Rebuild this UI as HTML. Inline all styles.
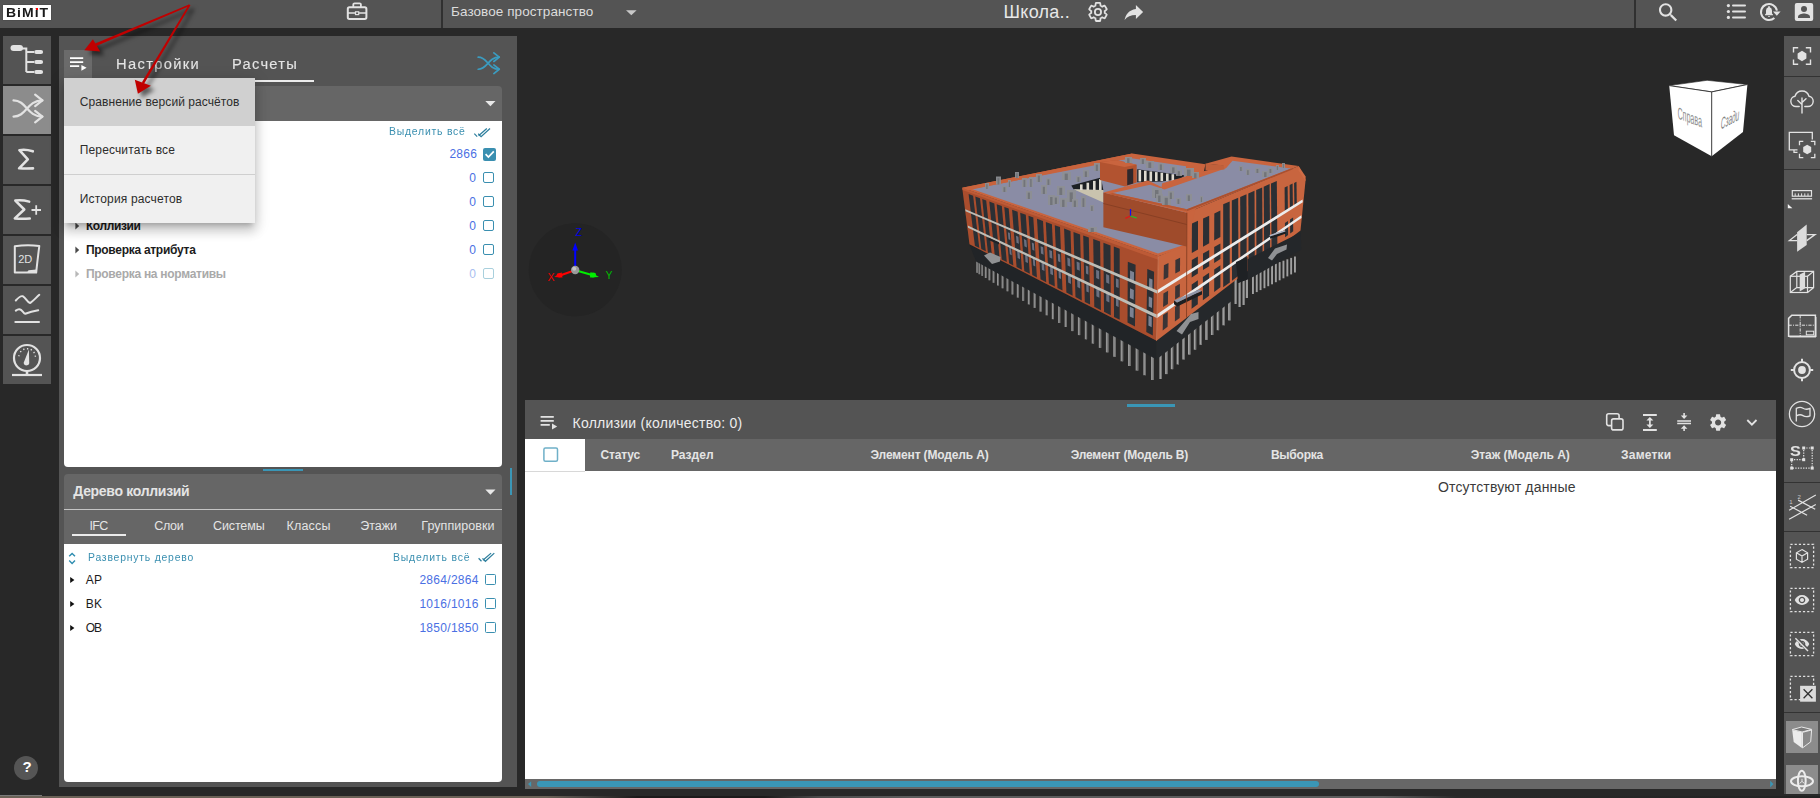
<!DOCTYPE html><html lang="ru"><head><meta charset="utf-8"><title>BiMiT</title><style>
html,body{margin:0;padding:0}body{width:1820px;height:798px;overflow:hidden;background:#282828;position:relative;font-family:'Liberation Sans', sans-serif}
.b{position:absolute}.t{position:absolute;white-space:pre;line-height:20px;height:20px}svg.f{position:absolute;left:0;top:0;pointer-events:none}
</style></head><body>
<svg class="f" width="1820" height="798" viewBox="0 0 1820 798"><rect x="976.3" y="259.8" width="1.6" height="13.0" fill="#a0a0a0" opacity="0.9"/><rect x="977.3" y="259.8" width="0.6" height="13.0" fill="#6e6e6e"/><rect x="978.5" y="261.0" width="1.6" height="13.2" fill="#a0a0a0" opacity="0.9"/><rect x="979.5" y="261.0" width="0.6" height="13.2" fill="#6e6e6e"/><rect x="981.4" y="262.5" width="1.6" height="13.4" fill="#a0a0a0" opacity="0.9"/><rect x="982.4" y="262.5" width="0.7" height="13.4" fill="#6e6e6e"/><rect x="984.8" y="264.4" width="1.7" height="13.6" fill="#a0a0a0" opacity="0.9"/><rect x="985.8" y="264.4" width="0.7" height="13.6" fill="#6e6e6e"/><rect x="988.5" y="266.4" width="1.7" height="13.9" fill="#a0a0a0" opacity="0.9"/><rect x="989.6" y="266.4" width="0.7" height="13.9" fill="#6e6e6e"/><rect x="992.6" y="268.6" width="1.7" height="14.2" fill="#a0a0a0" opacity="0.9"/><rect x="993.7" y="268.6" width="0.7" height="14.2" fill="#6e6e6e"/><rect x="997.0" y="271.0" width="1.7" height="14.5" fill="#a0a0a0" opacity="0.9"/><rect x="998.0" y="271.0" width="0.7" height="14.5" fill="#6e6e6e"/><rect x="1001.6" y="273.5" width="1.8" height="14.8" fill="#a0a0a0" opacity="0.9"/><rect x="1002.7" y="273.5" width="0.7" height="14.8" fill="#6e6e6e"/><rect x="1006.5" y="276.1" width="1.8" height="15.2" fill="#a0a0a0" opacity="0.9"/><rect x="1007.6" y="276.1" width="0.7" height="15.2" fill="#6e6e6e"/><rect x="1011.5" y="278.9" width="1.8" height="15.6" fill="#a0a0a0" opacity="0.9"/><rect x="1012.6" y="278.9" width="0.7" height="15.6" fill="#6e6e6e"/><rect x="1016.8" y="281.7" width="1.9" height="15.9" fill="#a0a0a0" opacity="0.9"/><rect x="1017.9" y="281.7" width="0.7" height="15.9" fill="#6e6e6e"/><rect x="1022.2" y="284.6" width="1.9" height="16.3" fill="#a0a0a0" opacity="0.9"/><rect x="1023.4" y="284.6" width="0.8" height="16.3" fill="#6e6e6e"/><rect x="1027.8" y="287.7" width="1.9" height="16.7" fill="#a0a0a0" opacity="0.9"/><rect x="1029.0" y="287.7" width="0.8" height="16.7" fill="#6e6e6e"/><rect x="1033.6" y="290.8" width="2.0" height="17.1" fill="#a0a0a0" opacity="0.9"/><rect x="1034.8" y="290.8" width="0.8" height="17.1" fill="#6e6e6e"/><rect x="1039.5" y="294.0" width="2.0" height="17.6" fill="#a0a0a0" opacity="0.9"/><rect x="1040.7" y="294.0" width="0.8" height="17.6" fill="#6e6e6e"/><rect x="1045.6" y="297.3" width="2.1" height="18.0" fill="#a0a0a0" opacity="0.9"/><rect x="1046.8" y="297.3" width="0.8" height="18.0" fill="#6e6e6e"/><rect x="1051.8" y="300.7" width="2.1" height="18.5" fill="#a0a0a0" opacity="0.9"/><rect x="1053.0" y="300.7" width="0.8" height="18.5" fill="#6e6e6e"/><rect x="1058.1" y="304.1" width="2.1" height="18.9" fill="#a0a0a0" opacity="0.9"/><rect x="1059.4" y="304.1" width="0.9" height="18.9" fill="#6e6e6e"/><rect x="1064.6" y="307.6" width="2.2" height="19.4" fill="#a0a0a0" opacity="0.9"/><rect x="1065.9" y="307.6" width="0.9" height="19.4" fill="#6e6e6e"/><rect x="1071.2" y="311.2" width="2.2" height="19.9" fill="#a0a0a0" opacity="0.9"/><rect x="1072.5" y="311.2" width="0.9" height="19.9" fill="#6e6e6e"/><rect x="1077.9" y="314.8" width="2.3" height="20.3" fill="#a0a0a0" opacity="0.9"/><rect x="1079.3" y="314.8" width="0.9" height="20.3" fill="#6e6e6e"/><rect x="1084.8" y="318.5" width="2.3" height="20.8" fill="#a0a0a0" opacity="0.9"/><rect x="1086.1" y="318.5" width="0.9" height="20.8" fill="#6e6e6e"/><rect x="1091.7" y="322.3" width="2.4" height="21.3" fill="#a0a0a0" opacity="0.9"/><rect x="1093.1" y="322.3" width="0.9" height="21.3" fill="#6e6e6e"/><rect x="1098.8" y="326.1" width="2.4" height="21.8" fill="#a0a0a0" opacity="0.9"/><rect x="1100.2" y="326.1" width="1.0" height="21.8" fill="#6e6e6e"/><rect x="1105.9" y="330.0" width="2.5" height="22.4" fill="#a0a0a0" opacity="0.9"/><rect x="1107.4" y="330.0" width="1.0" height="22.4" fill="#6e6e6e"/><rect x="1113.2" y="333.9" width="2.5" height="22.9" fill="#a0a0a0" opacity="0.9"/><rect x="1114.7" y="333.9" width="1.0" height="22.9" fill="#6e6e6e"/><rect x="1120.6" y="337.9" width="2.6" height="23.4" fill="#a0a0a0" opacity="0.9"/><rect x="1122.1" y="337.9" width="1.0" height="23.4" fill="#6e6e6e"/><rect x="1128.0" y="342.0" width="2.6" height="24.0" fill="#a0a0a0" opacity="0.9"/><rect x="1129.6" y="342.0" width="1.0" height="24.0" fill="#6e6e6e"/><rect x="1135.6" y="346.1" width="2.7" height="24.5" fill="#a0a0a0" opacity="0.9"/><rect x="1137.2" y="346.1" width="1.1" height="24.5" fill="#6e6e6e"/><rect x="1143.3" y="350.2" width="2.7" height="25.0" fill="#a0a0a0" opacity="0.9"/><rect x="1144.9" y="350.2" width="1.1" height="25.0" fill="#6e6e6e"/><rect x="1151.0" y="354.4" width="2.8" height="25.6" fill="#a0a0a0" opacity="0.9"/><rect x="1152.7" y="354.4" width="1.1" height="25.6" fill="#6e6e6e"/><rect x="1159.4" y="353.2" width="2.4" height="25.8" fill="#a2a2a2"/><rect x="1160.9" y="353.2" width="0.9" height="25.8" fill="#6e6e6e"/><rect x="1165.1" y="348.7" width="2.4" height="25.4" fill="#a2a2a2"/><rect x="1166.6" y="348.7" width="0.9" height="25.4" fill="#6e6e6e"/><rect x="1170.8" y="344.2" width="2.4" height="25.0" fill="#a2a2a2"/><rect x="1172.3" y="344.2" width="0.9" height="25.0" fill="#6e6e6e"/><rect x="1176.6" y="339.7" width="2.4" height="24.7" fill="#a2a2a2"/><rect x="1178.1" y="339.7" width="0.9" height="24.7" fill="#6e6e6e"/><rect x="1182.3" y="335.2" width="2.4" height="24.3" fill="#a2a2a2"/><rect x="1183.8" y="335.2" width="0.9" height="24.3" fill="#6e6e6e"/><rect x="1188.0" y="330.7" width="2.4" height="23.9" fill="#a2a2a2"/><rect x="1189.5" y="330.7" width="0.9" height="23.9" fill="#6e6e6e"/><rect x="1193.8" y="326.2" width="2.4" height="23.5" fill="#a2a2a2"/><rect x="1195.2" y="326.2" width="0.9" height="23.5" fill="#6e6e6e"/><rect x="1199.5" y="321.7" width="2.4" height="23.1" fill="#a2a2a2"/><rect x="1201.0" y="321.7" width="0.9" height="23.1" fill="#6e6e6e"/><rect x="1205.2" y="317.2" width="2.4" height="22.7" fill="#a2a2a2"/><rect x="1206.7" y="317.2" width="0.9" height="22.7" fill="#6e6e6e"/><rect x="1210.9" y="312.7" width="2.4" height="22.3" fill="#a2a2a2"/><rect x="1212.4" y="312.7" width="0.9" height="22.3" fill="#6e6e6e"/><rect x="1216.7" y="308.2" width="2.4" height="22.0" fill="#a2a2a2"/><rect x="1218.2" y="308.2" width="0.9" height="22.0" fill="#6e6e6e"/><rect x="1222.4" y="303.7" width="2.4" height="21.6" fill="#a2a2a2"/><rect x="1223.9" y="303.7" width="0.9" height="21.6" fill="#6e6e6e"/><rect x="1228.1" y="299.2" width="2.4" height="21.2" fill="#a2a2a2"/><rect x="1229.6" y="299.2" width="0.9" height="21.2" fill="#6e6e6e"/><rect x="1234.5" y="272" width="2.2" height="32" fill="#9c9c9c"/><rect x="1238.5" y="280" width="2.2" height="27" fill="#9c9c9c"/><rect x="1242.5" y="278" width="2.2" height="27" fill="#9c9c9c"/><rect x="1245.8" y="270" width="2.2" height="28" fill="#9c9c9c"/><rect x="1252.0" y="272.0" width="1.9" height="22.0" fill="#a0a0a0"/><rect x="1255.8" y="270.6" width="1.9" height="21.5" fill="#a0a0a0"/><rect x="1259.6" y="269.2" width="1.9" height="20.9" fill="#a0a0a0"/><rect x="1263.5" y="267.8" width="1.9" height="20.4" fill="#a0a0a0"/><rect x="1267.3" y="266.4" width="1.9" height="19.8" fill="#a0a0a0"/><rect x="1271.1" y="265.0" width="1.9" height="19.3" fill="#a0a0a0"/><rect x="1274.9" y="263.5" width="1.9" height="18.7" fill="#a0a0a0"/><rect x="1278.7" y="262.1" width="1.9" height="18.2" fill="#a0a0a0"/><rect x="1282.5" y="260.7" width="1.9" height="17.6" fill="#a0a0a0"/><rect x="1286.4" y="259.3" width="1.9" height="17.1" fill="#a0a0a0"/><rect x="1290.2" y="257.9" width="1.9" height="16.5" fill="#a0a0a0"/><rect x="1294.0" y="256.5" width="1.9" height="16.0" fill="#a0a0a0"/><polygon points="969.5,244.3 1156.5,340.7 1156.5,359.6 976.0,261.6" fill="#212427"/><polygon points="1156.5,340.7 1233.0,282.4 1231.0,301.5 1156.5,359.6" fill="#25282b"/><polygon points="1236.0,262.0 1248.0,254.0 1248.0,279.0 1238.0,283.0" fill="#202326"/><polygon points="962.2,187.7 1158.3,256.3 1156.5,340.7 969.5,244.3" fill="#a94d2d"/><polygon points="968.6,194.1 973.1,195.7 979.3,248.0 974.9,245.8" fill="#2b2f34"/><polygon points="975.3,196.5 980.0,198.2 985.8,251.3 981.3,249.0" fill="#2b2f34"/><polygon points="982.2,199.0 986.2,200.4 991.8,254.4 987.9,252.4" fill="#2b2f34"/><polygon points="989.3,201.6 994.3,203.4 999.6,258.3 994.8,255.9" fill="#2b2f34"/><polygon points="996.7,204.2 1001.8,206.1 1006.8,262.0 1001.8,259.5" fill="#2b2f34"/><polygon points="1004.3,207.0 1008.7,208.6 1013.3,265.4 1009.1,263.2" fill="#2b2f34"/><polygon points="1007.9,232.3 1009.8,233.1 1010.4,240.1 1008.5,239.2" fill="#6b7080"/><polygon points="1009.1,246.7 1011.0,247.6 1011.7,255.2 1009.8,254.3" fill="#6b7080"/><polygon points="1012.1,209.8 1017.6,211.8 1021.9,269.7 1016.6,267.1" fill="#2b2f34"/><polygon points="1016.0,235.7 1018.4,236.8 1018.9,243.8 1016.5,242.8" fill="#6b7080"/><polygon points="1017.1,250.4 1019.5,251.5 1020.1,259.3 1017.7,258.1" fill="#6b7080"/><polygon points="1020.2,212.7 1025.8,214.8 1029.8,273.8 1024.3,271.0" fill="#2b2f34"/><polygon points="1023.9,239.1 1026.4,240.2 1026.9,247.4 1024.4,246.3" fill="#6b7080"/><polygon points="1025.0,254.1 1027.5,255.2 1028.0,263.1 1025.5,261.9" fill="#6b7080"/><polygon points="1028.5,215.7 1033.3,217.5 1036.9,277.4 1032.3,275.1" fill="#2b2f34"/><polygon points="1031.8,242.5 1033.9,243.4 1034.4,250.7 1032.3,249.8" fill="#6b7080"/><polygon points="1032.8,257.7 1034.8,258.7 1035.3,266.6 1033.3,265.6" fill="#6b7080"/><polygon points="1037.0,218.8 1043.0,221.0 1046.2,282.2 1040.5,279.3" fill="#2b2f34"/><polygon points="1040.6,246.2 1043.2,247.3 1043.6,254.8 1041.0,253.6" fill="#6b7080"/><polygon points="1041.5,261.7 1044.1,262.9 1044.5,271.1 1041.9,269.8" fill="#6b7080"/><polygon points="1045.8,222.0 1051.9,224.2 1054.8,286.6 1048.9,283.6" fill="#2b2f34"/><polygon points="1049.3,249.9 1052.0,251.1 1052.3,258.7 1049.6,257.5" fill="#6b7080"/><polygon points="1050.0,265.7 1052.7,267.0 1053.1,275.2 1050.4,274.0" fill="#6b7080"/><polygon points="1054.8,225.2 1060.0,227.1 1062.5,290.5 1057.5,288.0" fill="#2b2f34"/><polygon points="1057.8,253.5 1060.1,254.5 1060.4,262.2 1058.1,261.2" fill="#6b7080"/><polygon points="1058.5,269.6 1060.7,270.7 1061.1,279.1 1058.8,278.0" fill="#6b7080"/><polygon points="1064.1,228.6 1070.5,230.9 1072.6,295.7 1066.4,292.5" fill="#2b2f34"/><polygon points="1067.3,257.6 1070.1,258.8 1070.4,266.7 1067.6,265.4" fill="#6b7080"/><polygon points="1067.9,274.0 1070.7,275.3 1071.0,283.9 1068.2,282.5" fill="#6b7080"/><polygon points="1073.5,232.0 1080.1,234.4 1081.8,300.4 1075.5,297.1" fill="#2b2f34"/><polygon points="1076.6,261.6 1079.6,262.8 1079.8,270.8 1076.9,269.6" fill="#6b7080"/><polygon points="1077.1,278.3 1080.0,279.6 1080.2,288.4 1077.4,287.0" fill="#6b7080"/><polygon points="1083.2,235.5 1088.8,237.5 1090.1,304.6 1084.8,301.9" fill="#2b2f34"/><polygon points="1085.8,265.5 1088.3,266.5 1088.4,274.7 1086.0,273.6" fill="#6b7080"/><polygon points="1086.2,282.5 1088.6,283.6 1088.8,292.6 1086.4,291.4" fill="#6b7080"/><polygon points="1093.2,239.1 1100.1,241.6 1100.9,310.2 1094.3,306.8" fill="#2b2f34"/><polygon points="1096.1,269.8 1099.1,271.1 1099.2,279.5 1096.2,278.1" fill="#6b7080"/><polygon points="1096.3,287.2 1099.3,288.6 1099.4,297.7 1096.4,296.3" fill="#6b7080"/><polygon points="1103.4,242.8 1110.5,245.4 1110.8,315.2 1104.0,311.8" fill="#2b2f34"/><polygon points="1106.1,274.1 1109.2,275.4 1109.3,284.0 1106.2,282.6" fill="#6b7080"/><polygon points="1106.2,291.8 1109.3,293.2 1109.4,302.5 1106.3,301.0" fill="#6b7080"/><polygon points="1113.8,246.6 1119.7,248.7 1119.7,319.8 1114.0,316.9" fill="#2b2f34"/><polygon points="1115.9,278.3 1118.6,279.4 1118.6,288.1 1116.0,286.9" fill="#6b7080"/><polygon points="1116.0,296.3 1118.6,297.5 1118.6,307.0 1116.0,305.7" fill="#6b7080"/><polygon points="1127.8,261.7 1135.6,264.7 1135.0,326.4 1127.5,322.6" fill="#2b2f34"/><polygon points="1130.1,270.6 1134.0,272.2 1133.9,281.9 1130.0,280.3" fill="#7c8292"/><polygon points="1130.0,288.3 1133.8,290.0 1133.7,299.7 1129.9,298.0" fill="#7c8292"/><polygon points="1129.9,306.8 1133.7,308.6 1133.6,318.3 1129.8,316.5" fill="#7c8292"/><polygon points="1147.3,269.1 1154.1,271.7 1152.8,335.4 1146.3,332.1" fill="#2b2f34"/><polygon points="1149.2,278.2 1152.5,279.5 1152.4,289.6 1149.0,288.2" fill="#7c8292"/><polygon points="1148.8,296.5 1152.2,297.9 1152.0,308.0 1148.7,306.5" fill="#7c8292"/><polygon points="1148.5,315.6 1151.8,317.2 1151.7,327.2 1148.4,325.6" fill="#7c8292"/><polygon points="962.2,187.7 1158.3,256.3 1158.3,259.8 962.5,189.9" fill="#bd5a36"/><polygon points="965.3,209.2 1157.0,290.2 1157.0,293.6 965.5,211.3" fill="#bdbdb6"/><polygon points="967.8,225.6 1156.7,314.6 1156.7,318.0 968.0,227.7" fill="#bdbdb6"/><polygon points="988.5,237.5 999.0,242.3 999.0,244.6 988.5,240.0" fill="#1f2225"/><polygon points="984.0,255.5 990.0,252.5 1000.5,257.0 1000.0,261.5 992.0,264.0" fill="#909294"/><polygon points="1158.3,256.3 1187.0,244.3 1187.0,317.5 1156.5,340.7" fill="#c8653f"/><polygon points="1186.9,212.7 1298.6,166.0 1305.6,180.0 1300.5,230.5 1186.5,317.8" fill="#c8653f"/><polygon points="1191.9,223.6 1198.0,220.8 1198.0,249.6 1191.8,253.0" fill="#2b2f34"/><polygon points="1191.8,260.1 1197.9,256.5 1197.9,273.4 1191.7,277.4" fill="#2b2f34"/><polygon points="1191.7,284.5 1197.9,280.3 1197.8,304.2 1191.6,308.8" fill="#2b2f34"/><polygon points="1203.1,218.5 1209.2,215.7 1209.2,243.3 1203.0,246.7" fill="#2b2f34"/><polygon points="1203.0,253.6 1209.2,250.0 1209.2,266.2 1203.0,270.1" fill="#2b2f34"/><polygon points="1202.9,277.0 1209.1,272.8 1209.1,295.7 1202.9,300.3" fill="#2b2f34"/><polygon points="1214.3,213.4 1220.4,210.6 1220.4,237.0 1214.2,240.5" fill="#2b2f34"/><polygon points="1214.2,247.0 1220.4,243.4 1220.4,258.9 1214.2,262.9" fill="#2b2f34"/><polygon points="1214.2,269.4 1220.4,265.3 1220.4,287.2 1214.2,291.9" fill="#2b2f34"/><polygon points="1223.2,204.3 1229.7,201.5 1229.8,282.4 1223.2,287.3" fill="#2b2f34"/><polygon points="1231.8,200.6 1238.2,197.8 1238.4,275.8 1232.0,280.7" fill="#2b2f34"/><polygon points="1240.2,196.9 1246.5,194.2 1246.7,269.5 1240.4,274.3" fill="#2b2f34"/><polygon points="1248.3,193.4 1254.5,190.7 1254.8,263.3 1248.6,268.1" fill="#2b2f34"/><polygon points="1256.2,190.0 1262.2,187.4 1262.6,257.4 1256.5,262.0" fill="#2b2f34"/><polygon points="1263.7,186.7 1269.6,184.1 1270.2,251.7 1264.2,256.2" fill="#2b2f34"/><polygon points="1271.0,183.5 1276.8,181.0 1277.4,246.2 1271.6,250.6" fill="#2b2f34"/><polygon points="1284.6,187.5 1287.6,186.1 1287.9,209.5 1284.8,211.4" fill="#2b2f34"/><polygon points="1289.6,185.1 1292.6,183.6 1292.9,206.4 1289.9,208.3" fill="#2b2f34"/><polygon points="1294.1,182.9 1296.5,181.7 1296.8,204.0 1294.4,205.5" fill="#2b2f34"/><polygon points="1284.9,223.0 1288.0,220.9 1288.1,235.0 1285.1,237.3" fill="#2b2f34"/><polygon points="1290.0,219.6 1293.1,217.5 1293.2,231.2 1290.2,233.5" fill="#2b2f34"/><polygon points="1163.9,265.3 1168.5,263.1 1168.3,277.3 1163.6,279.7" fill="#3a3436"/><polygon points="1163.4,293.4 1168.1,290.7 1167.9,304.0 1163.1,307.1" fill="#3a3436"/><polygon points="1163.0,315.1 1167.8,311.9 1167.6,326.8 1162.7,330.4" fill="#3a3436"/><polygon points="1175.4,259.9 1180.1,257.8 1180.0,271.1 1175.3,273.6" fill="#3a3436"/><polygon points="1175.2,286.5 1179.9,283.7 1179.8,296.4 1175.1,299.4" fill="#3a3436"/><polygon points="1175.0,307.0 1179.8,303.8 1179.7,317.9 1174.9,321.5" fill="#3a3436"/><polygon points="1157.0,290.2 1302.5,199.6 1302.8,202.3 1157.0,293.8" fill="#ececec"/><polygon points="1156.7,314.6 1301.3,215.2 1301.5,217.9 1156.7,318.2" fill="#ececec"/><polygon points="1247.5,259.2 1300.9,232.3 1301.2,249.7 1253.8,276.4 1247.5,279.5" fill="#24272a"/><polygon points="1236.0,262.0 1247.5,257.0 1247.5,279.5 1238.0,283.0" fill="#1e2124"/><line x1="1158.3" y1="256.3" x2="1156.5" y2="340.7" stroke="#d07a55" stroke-width="0.8"/><polygon points="1174.0,300.5 1199.0,289.5 1202.0,291.0 1177.0,302.5" fill="#9096a8"/><polygon points="1174.0,300.5 1177.0,302.5 1202.0,291.0 1202.0,294.5 1177.3,306.5 1174.0,304.3" fill="#1d1f22"/><polygon points="1176.5,331.0 1191.0,314.0 1198.5,312.0 1198.5,319.0 1190.0,322.0 1182.0,334.5" fill="#8f9194"/><polygon points="1269.5,235.5 1285.0,230.5 1286.0,233.5 1270.5,239.0" fill="#1c1e21"/><polygon points="1269.5,235.0 1285.0,230.2 1285.5,231.6 1270.0,236.6" fill="#aeb4c4"/><polygon points="1268.0,258.0 1275.0,248.5 1287.0,244.5 1286.5,249.5 1277.0,254.0 1272.0,260.5" fill="#8f9194"/><polygon points="962.2,187.7 1132.2,153.5 1205.5,164.2 1187.0,246.0 1158.3,256.3" fill="#c9643e"/><polygon points="972.0,189.0 1131.5,158.3 1186.0,166.2 1186.0,244.2 1158.0,253.6" fill="#8a8ca5"/><polygon points="962.2,187.7 1132.2,153.5 1132.2,156.6 968.0,190.3" fill="#c8633d"/><polygon points="1071.3,185.6 1101.0,177.5 1103.4,190.2 1073.5,189.3" fill="#1d2024"/><polygon points="1073.5,189.3 1103.4,190.0 1103.4,202.5 1098.3,200.3" fill="#c9c3ae"/><rect x="1080" y="184.4" width="2.6" height="5.6" fill="#dedad0"/><rect x="1086.5" y="182.7" width="2.6" height="7.3" fill="#dedad0"/><rect x="1093" y="180.9" width="2.6" height="9.1" fill="#dedad0"/><rect x="1099" y="179.2" width="2.6" height="10.8" fill="#dedad0"/><polygon points="1137.2,169.2 1185.2,175.4 1180.0,179.0 1161.5,181.6 1137.2,182.2" fill="#1d2024"/><rect x="1138.5" y="170.0" width="2.6" height="11.5" fill="#dedad0"/><rect x="1144" y="170.7" width="2.6" height="10.7" fill="#dedad0"/><rect x="1149.5" y="171.4" width="2.6" height="9.9" fill="#dedad0"/><rect x="1155" y="172.1" width="2.6" height="9.0" fill="#dedad0"/><rect x="1160.5" y="172.8" width="2.6" height="8.2" fill="#dedad0"/><rect x="1166" y="173.5" width="2.6" height="7.4" fill="#dedad0"/><rect x="1171.5" y="174.2" width="2.6" height="6.6" fill="#dedad0"/><polygon points="1100.0,162.0 1117.0,160.2 1136.7,164.8 1136.7,182.5 1125.0,186.5 1100.0,180.0" fill="#b25330"/><polygon points="1100.0,162.0 1117.0,160.2 1136.7,164.8 1124.5,167.0" fill="#c9643e"/><polygon points="1127.2,169.6 1133.2,168.6 1133.2,183.5 1127.2,185.3" fill="#30282c"/><polygon points="1103.4,192.4 1186.9,212.7 1186.5,246.5 1103.4,227.3" fill="#9f4b2b"/><line x1="1103.4" y1="203.5" x2="1186.8" y2="224.5" stroke="#7e3a20" stroke-width="0.7"/><polygon points="1103.4,192.4 1186.9,212.7 1298.6,166.0 1231.5,156.5 1205.5,163.8 1223.5,165.4 1162.3,183.3 1161.5,187.0 1148.0,180.6" fill="#c9643e"/><polygon points="1112.5,193.0 1186.9,209.3 1291.0,168.5 1232.5,160.8 1226.0,168.3 1164.5,189.5 1150.0,184.8" fill="#8a8ca5"/><polygon points="1205.5,163.6 1223.5,165.3 1224.5,169.6 1205.5,170.2" fill="#c0603b"/><polygon points="1186.9,209.3 1291.0,168.5 1293.0,169.3 1186.9,211.2" fill="#a95030"/><polygon points="1112.5,193.0 1186.9,209.3 1186.9,211.2 1109.0,194.2" fill="#b85834"/><polygon points="1298.6,166.0 1305.6,176.5 1305.6,181.0 1298.6,170.5" fill="#d06c45"/><line x1="1186.9" y1="212.7" x2="1186.5" y2="317.8" stroke="#7e3a20" stroke-width="0.8"/><rect x="996" y="176.5" width="5" height="8" fill="#8d8f94" opacity="0.92"/><rect x="997.5" y="178.1" width="1.8" height="6.4" fill="#6f7176" opacity="0.9"/><rect x="1008" y="180" width="3" height="7" fill="#8d8f94" opacity="0.92"/><rect x="1008.9" y="181.4" width="1.0" height="5.6" fill="#6f7176" opacity="0.9"/><rect x="1022" y="178" width="5" height="9" fill="#8d8f94" opacity="0.92"/><rect x="1023.5" y="179.8" width="1.8" height="7.2" fill="#6f7176" opacity="0.9"/><rect x="1029" y="177" width="4" height="10" fill="#8d8f94" opacity="0.92"/><rect x="1030.2" y="179.0" width="1.4" height="8.0" fill="#6f7176" opacity="0.9"/><rect x="1026" y="191" width="6" height="8" fill="#8d8f94" opacity="0.92"/><rect x="1027.8" y="192.6" width="2.1" height="6.4" fill="#6f7176" opacity="0.9"/><rect x="1048" y="195" width="7" height="10" fill="#8d8f94" opacity="0.92"/><rect x="1050.1" y="197.0" width="2.4" height="8.0" fill="#6f7176" opacity="0.9"/><rect x="1062" y="172" width="9" height="8" fill="#8d8f94" opacity="0.92"/><rect x="1064.7" y="173.6" width="3.1" height="6.4" fill="#6f7176" opacity="0.9"/><rect x="1067" y="190" width="9" height="12" fill="#8d8f94" opacity="0.92"/><rect x="1069.7" y="192.4" width="3.1" height="9.6" fill="#6f7176" opacity="0.9"/><rect x="1057" y="186" width="8" height="9" fill="#8d8f94" opacity="0.92"/><rect x="1059.4" y="187.8" width="2.8" height="7.2" fill="#6f7176" opacity="0.9"/><rect x="1081" y="196" width="5" height="11" fill="#8d8f94" opacity="0.92"/><rect x="1082.5" y="198.2" width="1.8" height="8.8" fill="#6f7176" opacity="0.9"/><rect x="1088" y="227" width="9" height="5" fill="#8d8f94" opacity="0.92"/><rect x="1090.7" y="228.0" width="3.1" height="4.0" fill="#6f7176" opacity="0.9"/><rect x="1094" y="163" width="6" height="8" fill="#8d8f94" opacity="0.92"/><rect x="1095.8" y="164.6" width="2.1" height="6.4" fill="#6f7176" opacity="0.9"/><rect x="1146" y="161" width="8" height="7" fill="#8d8f94" opacity="0.92"/><rect x="1148.4" y="162.4" width="2.8" height="5.6" fill="#6f7176" opacity="0.9"/><rect x="1170" y="166" width="7" height="7" fill="#8d8f94" opacity="0.92"/><rect x="1172.1" y="167.4" width="2.4" height="5.6" fill="#6f7176" opacity="0.9"/><rect x="1184" y="168" width="10" height="8" fill="#8d8f94" opacity="0.92"/><rect x="1187.0" y="169.6" width="3.5" height="6.4" fill="#6f7176" opacity="0.9"/><rect x="1152" y="188" width="10" height="10" fill="#8d8f94" opacity="0.92"/><rect x="1155.0" y="190.0" width="3.5" height="8.0" fill="#6f7176" opacity="0.9"/><rect x="1162" y="196" width="9" height="9" fill="#8d8f94" opacity="0.92"/><rect x="1164.7" y="197.8" width="3.1" height="7.2" fill="#6f7176" opacity="0.9"/><rect x="1186" y="194" width="6" height="7" fill="#8d8f94" opacity="0.92"/><rect x="1187.8" y="195.4" width="2.1" height="5.6" fill="#6f7176" opacity="0.9"/><rect x="1200" y="196" width="3" height="6" fill="#8d8f94" opacity="0.92"/><rect x="1200.9" y="197.2" width="1.0" height="4.8" fill="#6f7176" opacity="0.9"/><rect x="1246" y="169" width="4" height="6" fill="#8d8f94" opacity="0.92"/><rect x="1247.2" y="170.2" width="1.4" height="4.8" fill="#6f7176" opacity="0.9"/><rect x="1262" y="171" width="7" height="6" fill="#8d8f94" opacity="0.92"/><rect x="1264.1" y="172.2" width="2.4" height="4.8" fill="#6f7176" opacity="0.9"/><rect x="1276" y="165" width="3" height="5" fill="#8d8f94" opacity="0.92"/><rect x="1276.9" y="166.0" width="1.0" height="4.0" fill="#6f7176" opacity="0.9"/><rect x="1125" y="157" width="7" height="6" fill="#8d8f94" opacity="0.92"/><rect x="1127.1" y="158.2" width="2.4" height="4.8" fill="#6f7176" opacity="0.9"/><rect x="985" y="183" width="4" height="6" fill="#8d8f94" opacity="0.92"/><rect x="986.2" y="184.2" width="1.4" height="4.8" fill="#6f7176" opacity="0.9"/><rect x="1002" y="186" width="5" height="6" fill="#8d8f94" opacity="0.92"/><rect x="1003.5" y="187.2" width="1.8" height="4.8" fill="#6f7176" opacity="0.9"/><rect x="1015" y="172" width="4" height="6" fill="#8d8f94" opacity="0.92"/><rect x="1016.2" y="173.2" width="1.4" height="4.8" fill="#6f7176" opacity="0.9"/><rect x="1036" y="174" width="6" height="8" fill="#8d8f94" opacity="0.92"/><rect x="1037.8" y="175.6" width="2.1" height="6.4" fill="#6f7176" opacity="0.9"/><rect x="1041" y="185" width="6" height="9" fill="#8d8f94" opacity="0.92"/><rect x="1042.8" y="186.8" width="2.1" height="7.2" fill="#6f7176" opacity="0.9"/><rect x="1046" y="178" width="5" height="7" fill="#8d8f94" opacity="0.92"/><rect x="1047.5" y="179.4" width="1.8" height="5.6" fill="#6f7176" opacity="0.9"/><rect x="1053" y="196" width="6" height="8" fill="#8d8f94" opacity="0.92"/><rect x="1054.8" y="197.6" width="2.1" height="6.4" fill="#6f7176" opacity="0.9"/><rect x="1060" y="198" width="7" height="9" fill="#8d8f94" opacity="0.92"/><rect x="1062.1" y="199.8" width="2.4" height="7.2" fill="#6f7176" opacity="0.9"/><rect x="1072" y="199" width="6" height="8" fill="#8d8f94" opacity="0.92"/><rect x="1073.8" y="200.6" width="2.1" height="6.4" fill="#6f7176" opacity="0.9"/><rect x="1076" y="176" width="5" height="6" fill="#8d8f94" opacity="0.92"/><rect x="1077.5" y="177.2" width="1.8" height="4.8" fill="#6f7176" opacity="0.9"/><rect x="1083" y="170" width="6" height="7" fill="#8d8f94" opacity="0.92"/><rect x="1084.8" y="171.4" width="2.1" height="5.6" fill="#6f7176" opacity="0.9"/><rect x="1090" y="205" width="4" height="6" fill="#8d8f94" opacity="0.92"/><rect x="1091.2" y="206.2" width="1.4" height="4.8" fill="#6f7176" opacity="0.9"/><rect x="1140" y="158" width="6" height="6" fill="#8d8f94" opacity="0.92"/><rect x="1141.8" y="159.2" width="2.1" height="4.8" fill="#6f7176" opacity="0.9"/><rect x="1158" y="163" width="6" height="7" fill="#8d8f94" opacity="0.92"/><rect x="1159.8" y="164.4" width="2.1" height="5.6" fill="#6f7176" opacity="0.9"/><rect x="1176" y="170" width="6" height="6" fill="#8d8f94" opacity="0.92"/><rect x="1177.8" y="171.2" width="2.1" height="4.8" fill="#6f7176" opacity="0.9"/><rect x="1192" y="172" width="7" height="6" fill="#8d8f94" opacity="0.92"/><rect x="1194.1" y="173.2" width="2.4" height="4.8" fill="#6f7176" opacity="0.9"/><rect x="1156" y="194" width="7" height="8" fill="#8d8f94" opacity="0.92"/><rect x="1158.1" y="195.6" width="2.4" height="6.4" fill="#6f7176" opacity="0.9"/><rect x="1168" y="191" width="6" height="8" fill="#8d8f94" opacity="0.92"/><rect x="1169.8" y="192.6" width="2.1" height="6.4" fill="#6f7176" opacity="0.9"/><rect x="1176" y="198" width="5" height="6" fill="#8d8f94" opacity="0.92"/><rect x="1177.5" y="199.2" width="1.8" height="4.8" fill="#6f7176" opacity="0.9"/><rect x="1239" y="166" width="4" height="5" fill="#8d8f94" opacity="0.92"/><rect x="1240.2" y="167.0" width="1.4" height="4.0" fill="#6f7176" opacity="0.9"/><rect x="1255" y="168" width="5" height="5" fill="#8d8f94" opacity="0.92"/><rect x="1256.5" y="169.0" width="1.8" height="4.0" fill="#6f7176" opacity="0.9"/><rect x="1268" y="168" width="5" height="5" fill="#8d8f94" opacity="0.92"/><rect x="1269.5" y="169.0" width="1.8" height="4.0" fill="#6f7176" opacity="0.9"/><rect x="1282" y="163" width="3" height="5" fill="#8d8f94" opacity="0.92"/><rect x="1282.9" y="164.0" width="1.0" height="4.0" fill="#6f7176" opacity="0.9"/><line x1="1130.5" y1="209.0" x2="1130.5" y2="216.0" stroke="#1010f0" stroke-width="1.3"/><line x1="1130.5" y1="216.0" x2="1125.4" y2="218.4" stroke="#e01818" stroke-width="1.3"/><line x1="1130.5" y1="216.0" x2="1136.7" y2="218.0" stroke="#18c828" stroke-width="1.3"/><circle cx="575.2" cy="269.8" r="46.5" fill="#242424"/><path d="M575.2,266 V247" stroke="#0000ff" stroke-width="2"/><path d="M572.4,250.5 L575.2,242.5 L578,250.5z" fill="#0000ff"/><path d="M572,271.2 L560,275.5" stroke="#ff0000" stroke-width="2"/><path d="M554.2,277 L561.5,272.2 L562.5,277.5z" fill="#ff0000"/><ellipse cx="559.5" cy="275.2" rx="2.8" ry="2.2" fill="#ff0000"/><path d="M578,271 L592,275" stroke="#00ee00" stroke-width="2"/><path d="M599,277 L590.5,272 L590,277.5z" fill="#00ee00"/><ellipse cx="593" cy="275" rx="3" ry="2.4" fill="#00ee00"/><circle cx="575.2" cy="270" r="4.2" fill="#9a9a9a"/><circle cx="574.2" cy="268.8" r="2" fill="#c4c4c4"/><polygon points="1669.2,85.6 1707.1,80.3 1747.4,84.5 1711.7,91.9" fill="#ffffff" stroke="#222" stroke-width="0.6"/><polygon points="1669.2,85.6 1711.7,91.9 1711.7,156.2 1674.0,135.2" fill="#ffffff"/><polygon points="1711.7,91.9 1747.4,84.5 1743.0,131.9 1711.7,156.2" fill="#ffffff"/><line x1="1711.7" y1="91.9" x2="1711.7" y2="156.2" stroke="#333" stroke-width="0.9"/><line x1="1669.2" y1="85.6" x2="1711.7" y2="91.9" stroke="#333" stroke-width="0.9"/><line x1="1711.7" y1="91.9" x2="1747.4" y2="84.5" stroke="#333" stroke-width="0.9"/><text transform="matrix(0.74,0.27,0.04,1.75,1677.8,118.5)" font-family="'Liberation Sans',sans-serif" font-size="9.5" fill="#8c8c8c">Справа</text><text transform="matrix(0.68,-0.36,-0.03,1.7,1720.8,129.5)" font-family="'Liberation Sans',sans-serif" font-size="9.5" fill="#808080" font-style="italic">Сзади</text></svg>
<span class="t" style="left:575.60px;top:222.26px;font-size:10.5px;font-weight:400;color:#0000ee;">Z</span>
<span class="t" style="left:547.60px;top:267.16px;font-size:10.5px;font-weight:400;color:#ee0000;">X</span>
<span class="t" style="left:605.60px;top:265.36px;font-size:10.5px;font-weight:400;color:#00bb00;">Y</span>
<div class="b" style="left:0px;top:0px;width:1820px;height:28px;background:#545454;"></div>
<div class="b" style="left:441px;top:0px;width:2px;height:28px;background:#303030;"></div>
<div class="b" style="left:1634px;top:0px;width:2px;height:28px;background:#303030;"></div>
<div class="b" style="left:3px;top:5px;width:48px;height:15px;background:#ffffff;box-shadow:0 0 1px #333"></div>
<div class="b" style="left:3px;top:36px;width:48px;height:48px;background:#545454;"></div>
<div class="b" style="left:3px;top:86px;width:48px;height:48px;background:#8c8c8c;"></div>
<div class="b" style="left:3px;top:136px;width:48px;height:48px;background:#545454;"></div>
<div class="b" style="left:3px;top:186px;width:48px;height:48px;background:#545454;"></div>
<div class="b" style="left:3px;top:236px;width:48px;height:48px;background:#545454;"></div>
<div class="b" style="left:3px;top:286px;width:48px;height:48px;background:#545454;"></div>
<div class="b" style="left:3px;top:336px;width:48px;height:48px;background:#545454;"></div>
<div class="b" style="left:59px;top:36px;width:458px;height:751px;background:#545454;"></div>
<div class="b" style="left:64px;top:50px;width:28px;height:28px;background:#6b6b6b;"></div>
<div class="b" style="left:216px;top:80px;width:98px;height:2px;background:#ececec;"></div>
<div class="b" style="left:64px;top:120px;width:438px;height:347px;background:#ffffff;border-radius:0 0 4px 4px"></div>
<div class="b" style="left:64px;top:86px;width:438px;height:34.6px;background:#666666;border-radius:4px 4px 0 0"></div>
<div class="b" style="left:263px;top:469px;width:40px;height:2px;background:#3a96b6;"></div>
<div class="b" style="left:64px;top:474px;width:438px;height:70px;background:#666666;border-radius:4px 4px 0 0"></div>
<div class="b" style="left:64px;top:509px;width:438px;height:1px;background:#c4c4c4;"></div>
<div class="b" style="left:72px;top:534px;width:54px;height:2px;background:#ececec;"></div>
<div class="b" style="left:64px;top:544px;width:438px;height:238px;background:#ffffff;border-radius:0 0 4px 4px"></div>
<div class="b" style="left:510px;top:468px;width:2px;height:27px;background:#3a96b6;"></div>
<div class="b" style="left:483px;top:147.5px;width:13px;height:13px;background:#3a8fb0;border-radius:2px"></div>
<div class="b" style="left:483px;top:171.5px;width:9.4px;height:9.4px;background:#fff;border:1.8px solid #3a8fb0;border-radius:2px"></div>
<div class="b" style="left:483px;top:195.5px;width:9.4px;height:9.4px;background:#fff;border:1.8px solid #3a8fb0;border-radius:2px"></div>
<div class="b" style="left:483px;top:219.5px;width:9.4px;height:9.4px;background:#fff;border:1.8px solid #3a8fb0;border-radius:2px"></div>
<div class="b" style="left:483px;top:243.5px;width:9.4px;height:9.4px;background:#fff;border:1.8px solid #3a8fb0;border-radius:2px"></div>
<div class="b" style="left:483px;top:267.5px;width:9.4px;height:9.4px;background:#fff;border:1.8px solid #a9d0dd;border-radius:2px"></div>
<div class="b" style="left:484.8px;top:574.1px;width:9px;height:9px;background:#fff;border:1.4px solid #3a8fb0;border-radius:1.5px"></div>
<div class="b" style="left:484.8px;top:598.1px;width:9px;height:9px;background:#fff;border:1.4px solid #3a8fb0;border-radius:1.5px"></div>
<div class="b" style="left:484.8px;top:622.1px;width:9px;height:9px;background:#fff;border:1.4px solid #3a8fb0;border-radius:1.5px"></div>
<div class="b" style="left:525px;top:400px;width:1251px;height:39px;background:#545454;"></div>
<div class="b" style="left:525px;top:439px;width:60px;height:32px;background:#ffffff;"></div>
<div class="b" style="left:585px;top:439px;width:1191px;height:32px;background:#666666;"></div>
<div class="b" style="left:525px;top:471px;width:1251px;height:308px;background:#ffffff;"></div>
<div class="b" style="left:525px;top:470.5px;width:60px;height:1px;background:#d8d8d8;"></div>
<div class="b" style="left:525px;top:779px;width:1251px;height:10px;background:#676767;"></div>
<div class="b" style="left:537px;top:781px;width:782px;height:6px;background:#3a96b6;border-radius:3px"></div>
<div class="b" style="left:1127px;top:404px;width:48px;height:3px;background:#3a96b6;"></div>
<div class="b" style="left:1784px;top:36px;width:36px;height:758px;background:#545454;"></div>
<div class="b" style="left:1784px;top:76px;width:36px;height:1px;background:#333333;"></div>
<div class="b" style="left:1784px;top:169px;width:36px;height:1px;background:#333333;"></div>
<div class="b" style="left:1784px;top:482px;width:36px;height:1px;background:#333333;"></div>
<div class="b" style="left:1784px;top:531px;width:36px;height:1px;background:#333333;"></div>
<div class="b" style="left:1784px;top:712px;width:36px;height:1px;background:#333333;"></div>
<div class="b" style="left:1786px;top:721px;width:32px;height:32px;background:#8c8c8c;"></div>
<div class="b" style="left:1786px;top:765px;width:32px;height:29px;background:#8c8c8c;"></div>
<div class="b" style="left:0px;top:796px;width:1820px;height:2px;background:linear-gradient(90deg,#6b6257 0,#6b6257 30%,#4a4744 32%,#1c1a1a 35%,#1c1a1a 42%,#4a4a4a 45%,#5c5c5c 50%,#5c5c5c 76%,#2a2a2a 80%,#222 100%);"></div>
<div class="b" style="left:0px;top:794.6px;width:42px;height:1.6px;background:#7a7a7a;"></div>
<svg class="f" width="1820" height="798" viewBox="0 0 1820 798"><g fill="none" stroke="#e2e2e2" stroke-width="2"><rect x="347.8" y="7.3" width="18.6" height="11.6" rx="1.6"/><path d="M353.3,7.3 V4.6 a1.3,1.3 0 0 1 1.3,-1.3 h5 a1.3,1.3 0 0 1 1.3,1.3 V7.3" stroke-width="1.8"/><path d="M347.8,13 H355.3 M358.9,13 H366.4" stroke-width="1.6"/><rect x="355.5" y="11.8" width="3.2" height="2.8" stroke-width="1.2"/></g><path d="M626,10.3 h10.6 l-5.3,5z" fill="#c8c8c8"/><g transform="translate(1086.7,0.7) scale(0.94)" fill="none" stroke="#e2e2e2" stroke-width="1.9"><path d="M19.14,12.94c0.04-0.3,0.06-0.61,0.06-0.94c0-0.32-0.02-0.64-0.07-0.94l2.03-1.58c0.18-0.14,0.23-0.41,0.12-0.61 l-1.92-3.32c-0.12-0.22-0.37-0.29-0.59-0.22l-2.39,0.96c-0.5-0.38-1.03-0.7-1.62-0.94L14.4,2.81c-0.04-0.24-0.24-0.41-0.48-0.41 h-3.84c-0.24,0-0.43,0.17-0.47,0.41L9.25,5.35C8.66,5.59,8.12,5.92,7.63,6.29L5.24,5.33c-0.22-0.08-0.47,0-0.59,0.22L2.74,8.87 C2.62,9.08,2.66,9.34,2.86,9.48l2.03,1.58C4.84,11.36,4.8,11.69,4.8,12s0.02,0.64,0.07,0.94l-2.03,1.58 c-0.18,0.14-0.23,0.41-0.12,0.61l1.92,3.32c0.12,0.22,0.37,0.29,0.59,0.22l2.39-0.96c0.5,0.38,1.03,0.7,1.62,0.94l0.36,2.54 c0.05,0.24,0.24,0.41,0.48,0.41h3.84c0.24,0,0.44-0.17,0.47-0.41l0.36-2.54c0.59-0.24,1.13-0.56,1.62-0.94l2.39,0.96 c0.22,0.08,0.47,0,0.59-0.22l1.92-3.32c0.12-0.22,0.07-0.47-0.12-0.61L19.14,12.94z"/><circle cx="12" cy="12" r="3.3"/></g><path transform="translate(1146.2,0) scale(-1.03,1)" d="M10 9V5l-7 7 7 7v-4.1c5 0 8.5 1.6 11 5.1-1-5-4-10-11-11z" fill="#e2e2e2"/><path transform="translate(1655.9,0.2) scale(1.03)" d="M15.5 14h-.79l-.28-.27C15.41 12.59 16 11.11 16 9.5 16 5.91 13.09 3 9.5 3S3 5.91 3 9.5 5.91 16 9.5 16c1.61 0 3.09-.59 4.23-1.57l.27.28v.79l5 4.99L20.49 19l-4.99-5zm-6 0C7.01 14 5 11.99 5 9.5S7.01 5 9.5 5 14 7.01 14 9.5 11.99 14 9.5 14z" fill="#e2e2e2"/><g fill="#e2e2e2"><circle cx="1728.4" cy="5.6" r="1.6"/><circle cx="1728.4" cy="11.5" r="1.6"/><circle cx="1728.4" cy="17.4" r="1.6"/></g><path d="M1733,5.6 H1745 M1733,11.5 H1745 M1733,17.4 H1745" stroke="#e2e2e2" stroke-width="2" stroke-linecap="round"/><g><path d="M1776.9,10.6 A8,8 0 1 0 1774.4,17.9" fill="none" stroke="#e2e2e2" stroke-width="2"/><path d="M1773,11.5 h7.6 l-3.8,4.2z" fill="#e2e2e2"/><path d="M1765,15.2 v-0.8 l1,-1 v-3 a3,3.3 0 0 1 2.2,-3.2 v-0.5 a0.8,0.8 0 0 1 1.6,0 v0.5 a3,3.3 0 0 1 2.2,3.2 v3 l1,1 v0.8z M1768,16 h2 a1,1 0 0 1 -2,0z" fill="#e2e2e2"/></g><rect x="1794.8" y="3" width="18.4" height="17.9" rx="2" fill="#e2e2e2"/><circle cx="1804" cy="8.9" r="3" fill="#555"/><path d="M1798,18 v-1.2 c0,-2.2 4,-3.3 6,-3.3 s6,1.1 6,3.3 v1.2z" fill="#555"/><g stroke="#e2e2e2" fill="none"><path d="M13.5,48 H20" stroke-width="6" stroke-linecap="round"/><path d="M20,48.5 H26.3 V72 M26.3,52 H34 M26.3,62 H34 M26.3,72 H34" stroke-width="2"/><path d="M36.3,52 H41 M36.3,62 H41 M36.3,72 H41" stroke-width="4.2" stroke-linecap="round"/></g><g fill="none" stroke="#e2e2e2" stroke-width="2.2" stroke-linecap="round" stroke-linejoin="round"><path d="M13.5,100.38 C26.725,100.38 26.725,116.62 42.4,116.62"/><path d="M13.5,116.62 C26.725,116.62 26.725,100.38 42.4,100.38"/><path d="M35.15,94.58 L42.4,100.38 L35.15,106.17999999999999"/><path d="M35.15,110.82000000000001 L42.4,116.62 L35.15,122.42"/></g><path d="M32.8,151.3 C28,149.8 23.4,149.3 19.4,150.2 L27.8,159.3 L19.1,168.3 C23.4,168.6 28,168.6 33,168.4" fill="none" stroke="#e2e2e2" stroke-width="2.6" stroke-linecap="round" stroke-linejoin="round"/><path d="M29.2,201.6 C24.5,200.3 19.5,199.8 15.3,200.6 L24.3,209.5 L14.8,218.4 C19.5,218.8 24.5,218.8 29.8,218.5" fill="none" stroke="#e2e2e2" stroke-width="2.5" stroke-linecap="round" stroke-linejoin="round"/><path d="M31.5,210 H41 M36.2,205.2 V214.8" stroke="#e2e2e2" stroke-width="1.8"/><path d="M14.8,246.2 C22,245.2 31,244.9 39.3,246 C38.2,255 37,264 36.2,272.6 L14.8,272.6 Z" fill="none" stroke="#e2e2e2" stroke-width="2" stroke-linejoin="round"/><path d="M27,272.6 L28.5,270.3 L36.4,269.6 L36.2,272.6z" fill="#e2e2e2"/><g fill="none" stroke="#e2e2e2" stroke-width="2" stroke-linecap="round" stroke-linejoin="round"><path d="M15.8,300.5 C18,298 21,295.5 23,296.3 C25.5,297.5 27.5,302.5 30,303 C33,301.5 36.5,297 39.3,294.8"/><path d="M15.8,310.6 C17.5,309.3 19.5,308.8 21,309.8 C22.8,311 23.8,313.6 25.3,313.8 C29,312.3 34,311 38.2,310.3"/><path d="M15.3,321.9 H39"/></g><g fill="none" stroke="#e2e2e2"><circle cx="27" cy="358" r="13" stroke-width="2.2"/><path d="M27,371 V375" stroke-width="2.6"/><path d="M12,375 H42" stroke-width="2.2"/><path d="M18.3,355.5 l1.3,0.5 M20.2,351.2 l1.1,0.9 M23.5,348.7 l0.7,1.2 M27.6,348 l0,1.4 M31.6,349.2 l-0.7,1.2 M34.6,352 l-1.1,0.9 M36,356 l-1.3,0.4" stroke-width="1.3"/></g><path d="M28.9,349.5 L29.2,362 a2.6,2.6 0 0 1 -5.6,1z" fill="#e2e2e2"/><circle cx="26" cy="768" r="12" fill="#555"/><g stroke="#ffffff" stroke-width="1.7" fill="none"><path d="M70,58.199999999999996 h13.2 M70,62.199999999999996 h13.2 M70,66.2 h9.2"/></g><path d="M81.4,64.89999999999999 l5.2,2.9 l-5.2,2.9z" fill="#ffffff"/><g fill="none" stroke="#3b9cc0" stroke-width="1.7" stroke-linecap="round" stroke-linejoin="round"><path d="M478.2,57.152 C487.78000000000003,57.152 487.78000000000003,69.248 499.25,69.248"/><path d="M478.2,69.248 C487.78000000000003,69.248 487.78000000000003,57.152 499.25,57.152"/><path d="M493.85,52.832 L499.25,57.152 L493.85,61.472"/><path d="M493.85,64.928 L499.25,69.248 L493.85,73.56800000000001"/></g><path d="M485.3,101 h10.2 l-5.1,5.2z" fill="#e8e8e8"/><path d="M485.3,489.5 h10.2 l-5.1,5.2z" fill="#e8e8e8"/><g stroke="#2e7f9e" stroke-width="1.25" fill="none" stroke-linecap="butt"><path d="M474.3,133.6 l2.9,3 M478.2,133.8 l2.9,2.9 l8.9,-8.2 M478.6,135.70000000000002 l8.2,-7.2"/></g><g stroke="#2e7f9e" stroke-width="1.25" fill="none" stroke-linecap="butt"><path d="M478.6,558.2 l2.9,3 M482.5,558.4 l2.9,2.9 l8.9,-8.2 M482.90000000000003,560.3 l8.2,-7.2"/></g><path d="M75.4,222.6 l3.8,3.4 l-3.8,3.4z" fill="#4a4a4a"/><path d="M75.4,246.6 l3.8,3.4 l-3.8,3.4z" fill="#4a4a4a"/><path d="M75.4,270.6 l3.8,3.4 l-3.8,3.4z" fill="#b8b8b8"/><path d="M70.2,577 l4.2,3 l-4.2,3z" fill="#111"/><path d="M70.2,601 l4.2,3 l-4.2,3z" fill="#111"/><path d="M70.2,625 l4.2,3 l-4.2,3z" fill="#111"/><path d="M69.2,556.3 l2.9,-2.9 l2.9,2.9 M69.2,560.6 l2.9,2.9 l2.9,-2.9" fill="none" stroke="#2e8db0" stroke-width="1.4"/><g stroke="#e2e2e2" stroke-width="1.7" fill="none"><path d="M540.6,416.9 h13.2 M540.6,420.9 h13.2 M540.6,424.9 h9.2"/></g><path d="M552.0,423.6 l5.2,2.9 l-5.2,2.9z" fill="#e2e2e2"/><g fill="none" stroke="#e2e2e2" stroke-width="1.6"><rect x="1606.7" y="413.8" width="12.4" height="11.8" rx="2"/><rect x="1611.6" y="418.9" width="11.4" height="11" rx="2" fill="#555"/></g><g fill="none" stroke="#e2e2e2"><path d="M1643,415 H1656.8 M1643,430 H1656.8" stroke-width="1.9"/><path d="M1649.9,419 V426" stroke-width="1.7"/></g><path d="M1646.4,420.6 l3.5,-3.6 l3.5,3.6z M1646.4,424.4 l3.5,3.6 l3.5,-3.6z" fill="#e2e2e2"/><g fill="none" stroke="#e2e2e2"><path d="M1677.2,420.9 H1691 M1677.2,423.6 H1691" stroke-width="1.5"/><path d="M1684.1,413 V417 M1684.1,431 V427" stroke-width="1.6"/></g><path d="M1680.8,415.4 h6.6 l-3.3,3.6z M1680.8,428.8 h6.6 l-3.3,-3.6z" fill="#e2e2e2"/><path transform="translate(1707.9,412.3) scale(0.85)" d="M19.14,12.94c0.04-0.3,0.06-0.61,0.06-0.94c0-0.32-0.02-0.64-0.07-0.94l2.03-1.58c0.18-0.14,0.23-0.41,0.12-0.61 l-1.92-3.32c-0.12-0.22-0.37-0.29-0.59-0.22l-2.39,0.96c-0.5-0.38-1.03-0.7-1.62-0.94L14.4,2.81c-0.04-0.24-0.24-0.41-0.48-0.41 h-3.84c-0.24,0-0.43,0.17-0.47,0.41L9.25,5.35C8.66,5.59,8.12,5.92,7.63,6.29L5.24,5.33c-0.22-0.08-0.47,0-0.59,0.22L2.74,8.87 C2.62,9.08,2.66,9.34,2.86,9.48l2.03,1.58C4.84,11.36,4.8,11.69,4.8,12s0.02,0.64,0.07,0.94l-2.03,1.58 c-0.18,0.14-0.23,0.41-0.12,0.61l1.92,3.32c0.12,0.22,0.37,0.29,0.59,0.22l2.39-0.96c0.5,0.38,1.03,0.7,1.62,0.94l0.36,2.54 c0.05,0.24,0.24,0.41,0.48,0.41h3.84c0.24,0,0.44-0.17,0.47-0.41l0.36-2.54c0.59-0.24,1.13-0.56,1.62-0.94l2.39,0.96 c0.22,0.08,0.47,0,0.59-0.22l1.92-3.32c0.12-0.22,0.07-0.47-0.12-0.61L19.14,12.94z M12,15.6c-1.98,0-3.6-1.62-3.6-3.6 s1.62-3.6,3.6-3.6s3.6,1.62,3.6,3.6S13.98,15.6,12,15.6z" fill="#e2e2e2" fill-rule="evenodd"/><path d="M1747.3,420 l4.6,4.7 l4.6,-4.7" fill="none" stroke="#e2e2e2" stroke-width="1.8"/><rect x="543.9" y="447.9" width="13.6" height="13.4" rx="1.5" fill="#fff" stroke="#6fb0c8" stroke-width="1.5"/><path d="M1793.5,52.5 V47.8 H1798.2 M1805.8,47.8 H1810.5 V52.5 M1810.5,59.5 V64.2 H1805.8 M1798.2,64.2 H1793.5 V59.5" fill="none" stroke="#e2e2e2" stroke-width="1.4"/><path d="M1802,50.8 l4.4,2.6 v5.2 l-4.4,2.6 l-4.4,-2.6 v-5.2z" fill="#e2e2e2"/><g fill="none" stroke="#e2e2e2" stroke-width="1.4" stroke-linecap="round"><path d="M1799.2,106.5 H1796 a5.2,5.2 0 0 1 -1,-10.3 a7.3,7.3 0 0 1 14,0 a5.2,5.2 0 0 1 -1,10.3 H1804.8"/><path d="M1802,98 V113 M1802,104.5 L1797.8,100.5 M1802,102.5 L1806,98.7"/></g><path d="M1797.5,149.8 H1789.3 V132.4 H1812.3 V139.5 M1794,149.8 V152.3 H1797.5" fill="none" stroke="#e2e2e2" stroke-width="1.3"/><path d="M1799.5,145.2 V141.4 H1803.3 M1810.8,141.4 H1814.8 V145.2 M1814.8,153.8 V157.6 H1810.8 M1803.3,157.6 H1799.5 V153.8" fill="none" stroke="#e2e2e2" stroke-width="1.3"/><path d="M1807.2,144.7 l4,2.4 v4.8 l-4,2.4 l-4,-2.4 v-4.8z" fill="#e2e2e2"/><g fill="none" stroke="#e2e2e2"><rect x="1792.3" y="190.6" width="19.2" height="5.6" stroke-width="1.2"/><path d="M1795.2,196 v-2.6 M1798.4,196 v-2.6 M1801.6,196 v-2.6 M1804.8,196 v-2.6 M1808,196 v-2.6" stroke-width="1"/><path d="M1791.7,198.8 H1812.1" stroke-width="1.3"/></g><path d="M1787.8,204 V208.3 H1792.4z" fill="#f4f4f4"/><path d="M1797.1,232.3 L1806.7,224.4 V245 L1797.1,251.8z" fill="#dcdcdc"/><path d="M1797.1,240.6 H1789.4 L1797.1,234.6 M1806.7,234.6 H1815 L1806.7,240.6" fill="none" stroke="#e2e2e2" stroke-width="1.3"/><g fill="none" stroke="#e2e2e2" stroke-width="1.2"><rect x="1790.3" y="276.3" width="17.2" height="16.2"/><path d="M1790.3,276.3 L1796.8,271.4 H1813.6 V287.6 L1807.5,292.5 M1807.5,276.3 L1813.6,271.4 M1796.8,271.4 V287.6 H1813.6 M1796.8,287.6 L1790.3,292.5"/></g><path d="M1799.7,274.4 L1805.1,271.8 V288.2 L1799.7,291.4z" fill="#dcdcdc"/><g fill="none" stroke="#e2e2e2"><path d="M1791.8,315.2 H1815.4 V336.2 H1788.6 V318.4 Z" stroke-width="1.5"/><path d="M1788.6,325.2 H1815.4 M1800.2,315.2 V336.2" stroke-width="1" stroke-dasharray="3.2 1.2 1 1.2"/><rect x="1806.3" y="331.2" width="7.4" height="3.6" stroke-width="1"/><path d="M1789.5,337 H1816 V317" stroke-width="0.9"/></g><circle cx="1802" cy="370" r="7.9" fill="none" stroke="#e2e2e2" stroke-width="2"/><circle cx="1802" cy="370" r="3.9" fill="#e2e2e2"/><path d="M1802,358.8 v3 M1802,378.2 v3 M1790.8,370 h3 M1810.2,370 h3" stroke="#e2e2e2" stroke-width="2"/><circle cx="1802" cy="414" r="12.6" fill="none" stroke="#e2e2e2" stroke-width="1.3"/><path d="M1796.3,421.4 V408.4 C1799,407 1801.5,407.2 1803,408.2 C1805,409.5 1807.5,409.5 1810,408.4 V415.8 C1807.5,416.9 1805,416.9 1803,415.6 C1801.5,414.6 1799,414.4 1796.3,415.8" fill="none" stroke="#e2e2e2" stroke-width="1.3"/><g fill="none" stroke="#e2e2e2" stroke-width="1.2" stroke-dasharray="1.3 1.3"><path d="M1803.7,448 H1812.2 V468.1 H1791.7 V459.7 H1803.7 V448"/></g><g fill="#e2e2e2"><rect x="1802.2" y="446.5" width="3" height="3"/><rect x="1810.7" y="446.5" width="3" height="3"/><rect x="1810.7" y="466.6" width="3" height="3"/><rect x="1790.2" y="466.6" width="3" height="3"/><rect x="1790.2" y="458.2" width="3" height="3"/><rect x="1802.2" y="458.2" width="3" height="3"/></g><path d="M1789.1,510.2 L1815.8,495.1 M1789.1,519.2 L1815.8,504.5 M1790.1,506.2 L1807.1,515.2 M1798.1,500.1 L1815.2,509.2" fill="none" stroke="#e2e2e2" stroke-width="1.2"/><rect x="1790.4" y="544.4" width="23.2" height="23.2" fill="none" stroke="#e2e2e2" stroke-width="1.3" stroke-dasharray="2.2 2.02"/><path d="M1802,549.6 l5.6,3.2 v6.4 l-5.6,3.2 l-5.6,-3.2 v-6.4z M1796.4,552.8 l5.6,3.2 l5.6,-3.2 M1802,556 v6.4" fill="none" stroke="#e2e2e2" stroke-width="1.2"/><rect x="1790.4" y="588.4" width="23.2" height="23.2" fill="none" stroke="#e2e2e2" stroke-width="1.3" stroke-dasharray="2.2 2.02"/><path transform="translate(1794.1,592.1) scale(0.66)" d="M12 4.5C7 4.5 2.73 7.61 1 12c1.73 4.39 6 7.5 11 7.5s9.27-3.11 11-7.5c-1.73-4.39-6-7.5-11-7.5zM12 17c-2.76 0-5-2.24-5-5s2.24-5 5-5 5 2.24 5 5-2.24 5-5 5zm0-8c-1.66 0-3 1.34-3 3s1.34 3 3 3 3-1.34 3-3-1.34-3-3-3z" fill="#e2e2e2"/><rect x="1790.4" y="632.4" width="23.2" height="23.2" fill="none" stroke="#e2e2e2" stroke-width="1.3" stroke-dasharray="2.2 2.02"/><path transform="translate(1794.1,636.1) scale(0.66)" d="M12 4.5C7 4.5 2.73 7.61 1 12c1.73 4.39 6 7.5 11 7.5s9.27-3.11 11-7.5c-1.73-4.39-6-7.5-11-7.5zM12 17c-2.76 0-5-2.24-5-5s2.24-5 5-5 5 2.24 5 5-2.24 5-5 5zm0-8c-1.66 0-3 1.34-3 3s1.34 3 3 3 3-1.34 3-3-1.34-3-3-3z" fill="#e2e2e2"/><path d="M1795.6,637.2 L1808.2,650.6" stroke="#555" stroke-width="3.4"/><path d="M1795.4,638.2 L1808,651" stroke="#e2e2e2" stroke-width="1.4"/><rect x="1790.4" y="676.4" width="23.2" height="23.2" fill="none" stroke="#e2e2e2" stroke-width="1.3" stroke-dasharray="2.2 2.02"/><rect x="1800.1" y="685.8" width="15.8" height="15.9" fill="#dcdcdc"/><path d="M1803.6,689.3 l8.8,8.9 M1812.4,689.3 l-8.8,8.9" stroke="#333" stroke-width="1.3"/><path d="M1792.3,729.6 L1801.6,727 L1811.6,729.4 L1802.1,732z" fill="#7a7a7a" stroke="#e8e8e8" stroke-width="1"/><path d="M1792.2,730 L1801.9,732.3 V747.9 L1793.7,742z" fill="#ececec"/><path d="M1802.5,732.3 L1811.6,730 L1810.7,741.8 L1802.5,747.9z" fill="#8a8a8a" stroke="#e8e8e8" stroke-width="1"/><g fill="none" stroke="#ececec"><ellipse cx="1802" cy="781.3" rx="11" ry="5" stroke-width="2"/><ellipse cx="1801.8" cy="780.8" rx="3.9" ry="10" stroke-width="2"/><path d="M1802,778.8 v2.6 l-2.4,2 M1802,781.4 l2.4,2" stroke-width="0.9"/></g>
<path d="M531.2,781.3 V787 L528,784.1z" fill="#3a96b6"/><path d="M1770.2,780.8 V787.4 L1773.4,784.1z" fill="#3a96b6"/>
<path d="M485.6,154.2 l2.8,2.8 l5.4,-5.6" fill="none" stroke="#fff" stroke-width="1.7"/>
</svg>
<span class="t" style="left:6.2px;top:2.6px;font-size:12.5px;font-weight:700;color:#1a1a1a;letter-spacing:0.9px;transform:scaleX(1.12);transform-origin:0 0">BiMiT</span>
<div class="b" style="left:35.9px;top:7.9px;width:2.4px;height:2.2px;background:#ff0000;"></div>
<span class="t" style="left:22.40px;top:757.40px;font-size:15px;font-weight:700;color:#ffffff;">?</span>
<span class="t" style="left:18.20px;top:249.49px;font-size:11px;font-weight:400;color:#e2e2e2;">2D</span>
<span class="t" style="left:1789.60px;top:441.18px;font-size:14.5px;font-weight:700;color:#e2e2e2;transform:scaleX(1.12);transform-origin:0 0;">S</span>
<span class="t" style="left:1789.20px;top:492.32px;font-size:6px;font-weight:400;color:#c8c8c8;">1</span>
<span class="t" style="left:1797.60px;top:486.72px;font-size:6px;font-weight:400;color:#c8c8c8;">2</span>
<span class="t" style="left:451.03px;top:1.52px;font-size:13.5px;font-weight:400;color:#dcdcdc;letter-spacing:0.079px;">Базовое пространство</span>
<span class="t" style="left:1003.53px;top:1.56px;font-size:18px;font-weight:400;color:#e8e8e8;letter-spacing:0.269px;">Школа..</span>
<span class="t" style="left:116.21px;top:54.25px;font-size:14px;font-weight:400;color:#e4e4e4;letter-spacing:1.269px;transform:scaleX(1.05);transform-origin:0 0;-webkit-text-stroke:0.12px #e4e4e4;">Настройки</span>
<span class="t" style="left:231.91px;top:54.25px;font-size:14px;font-weight:400;color:#e4e4e4;letter-spacing:1.195px;transform:scaleX(1.05);transform-origin:0 0;-webkit-text-stroke:0.12px #e4e4e4;">Расчеты</span>
<span class="t" style="left:85.89px;top:215.64px;font-size:12px;font-weight:700;color:#1c1c1c;letter-spacing:-0.369px;">Коллизии</span>
<span class="t" style="left:85.89px;top:239.64px;font-size:12px;font-weight:700;color:#1c1c1c;letter-spacing:-0.280px;">Проверка атрибута</span>
<span class="t" style="left:85.89px;top:263.64px;font-size:12px;font-weight:700;color:#a9a9a9;letter-spacing:-0.280px;">Проверка на нормативы</span>
<span class="t" style="left:389.37px;top:121.94px;font-size:10px;font-weight:400;color:#3a8fb0;letter-spacing:0.753px;transform:scaleX(1.04);transform-origin:0 0;">Выделить всё</span>
<span class="t" style="left:449.39px;top:144.14px;font-size:12px;font-weight:400;color:#4a6fe3;letter-spacing:0.272px;">2866</span>
<span class="t" style="left:469.19px;top:168.14px;font-size:12px;font-weight:400;color:#4a6fe3;letter-spacing:0.000px;">0</span>
<span class="t" style="left:469.19px;top:192.14px;font-size:12px;font-weight:400;color:#4a6fe3;letter-spacing:0.000px;">0</span>
<span class="t" style="left:469.19px;top:216.14px;font-size:12px;font-weight:400;color:#4a6fe3;letter-spacing:0.000px;">0</span>
<span class="t" style="left:469.19px;top:240.14px;font-size:12px;font-weight:400;color:#4a6fe3;letter-spacing:0.000px;">0</span>
<span class="t" style="left:469.19px;top:264.14px;font-size:12px;font-weight:400;color:#a9c0f0;letter-spacing:0.000px;">0</span>
<span class="t" style="left:73.31px;top:481.35px;font-size:14px;font-weight:700;color:#e4e4e4;letter-spacing:-0.310px;">Дерево коллизий</span>
<span class="t" style="left:89.47px;top:515.67px;font-size:12.5px;font-weight:400;color:#e4e4e4;letter-spacing:-0.689px;">IFC</span>
<span class="t" style="left:154.37px;top:515.67px;font-size:12.5px;font-weight:400;color:#e4e4e4;letter-spacing:-0.381px;">Слои</span>
<span class="t" style="left:213.07px;top:515.67px;font-size:12.5px;font-weight:400;color:#e4e4e4;letter-spacing:-0.135px;">Системы</span>
<span class="t" style="left:286.47px;top:515.67px;font-size:12.5px;font-weight:400;color:#e4e4e4;letter-spacing:0.209px;">Классы</span>
<span class="t" style="left:360.17px;top:515.67px;font-size:12.5px;font-weight:400;color:#e4e4e4;letter-spacing:-0.003px;">Этажи</span>
<span class="t" style="left:421.27px;top:515.67px;font-size:12.5px;font-weight:400;color:#e4e4e4;letter-spacing:0.061px;">Группировки</span>
<span class="t" style="left:88.08px;top:547.74px;font-size:10px;font-weight:400;color:#3a8fb0;letter-spacing:0.754px;transform:scaleX(1.04);transform-origin:0 0;">Развернуть дерево</span>
<span class="t" style="left:392.97px;top:547.74px;font-size:10px;font-weight:400;color:#3a8fb0;letter-spacing:0.805px;transform:scaleX(1.04);transform-origin:0 0;">Выделить всё</span>
<span class="t" style="left:85.79px;top:570.04px;font-size:12px;font-weight:400;color:#1c1c1c;letter-spacing:0.104px;">AP</span>
<span class="t" style="left:85.79px;top:594.04px;font-size:12px;font-weight:400;color:#1c1c1c;letter-spacing:0.104px;">BK</span>
<span class="t" style="left:85.79px;top:618.04px;font-size:12px;font-weight:400;color:#1c1c1c;letter-spacing:-1.224px;">OB</span>
<span class="t" style="left:419.39px;top:570.04px;font-size:12px;font-weight:400;color:#4a6fe3;letter-spacing:0.298px;">2864/2864</span>
<span class="t" style="left:419.39px;top:594.04px;font-size:12px;font-weight:400;color:#4a6fe3;letter-spacing:0.298px;">1016/1016</span>
<span class="t" style="left:419.39px;top:618.04px;font-size:12px;font-weight:400;color:#4a6fe3;letter-spacing:0.298px;">1850/1850</span>
<span class="t" style="left:572.50px;top:412.55px;font-size:14px;font-weight:400;color:#ececec;letter-spacing:0.254px;">Коллизии (количество: 0)</span>
<span class="t" style="left:600.49px;top:445.14px;font-size:12px;font-weight:700;color:#e4e4e4;letter-spacing:-0.167px;">Статус</span>
<span class="t" style="left:670.89px;top:445.14px;font-size:12px;font-weight:700;color:#e4e4e4;letter-spacing:0.035px;">Раздел</span>
<span class="t" style="left:870.49px;top:445.14px;font-size:12px;font-weight:700;color:#e4e4e4;letter-spacing:-0.145px;">Элемент (Модель A)</span>
<span class="t" style="left:1070.69px;top:445.14px;font-size:12px;font-weight:700;color:#e4e4e4;letter-spacing:-0.186px;">Элемент (Модель B)</span>
<span class="t" style="left:1270.89px;top:445.14px;font-size:12px;font-weight:700;color:#e4e4e4;letter-spacing:-0.209px;">Выборка</span>
<span class="t" style="left:1470.69px;top:445.14px;font-size:12px;font-weight:700;color:#e4e4e4;letter-spacing:-0.019px;">Этаж (Модель A)</span>
<span class="t" style="left:1621.09px;top:445.14px;font-size:12px;font-weight:700;color:#e4e4e4;letter-spacing:0.196px;">Заметки</span>
<span class="t" style="left:1437.90px;top:477.35px;font-size:14px;font-weight:400;color:#3a3a3a;letter-spacing:0.170px;">Отсутствуют данные</span>
<div class="b" style="left:64px;top:78px;width:191px;height:145px;background:#f0f0f0;box-shadow:0 5px 5px -3px rgba(0,0,0,.2),0 8px 10px 1px rgba(0,0,0,.14),0 3px 14px 2px rgba(0,0,0,.12)"></div>
<div class="b" style="left:64px;top:78px;width:191px;height:48px;background:#d0d0d0;"></div>
<div class="b" style="left:64px;top:174px;width:191px;height:1px;background:#cfcfcf;"></div>
<span class="t" style="left:79.79px;top:91.84px;font-size:12px;font-weight:400;color:#2c2c2c;letter-spacing:0.071px;">Сравнение версий расчётов</span>
<span class="t" style="left:79.79px;top:140.04px;font-size:12px;font-weight:400;color:#2c2c2c;letter-spacing:0.135px;">Пересчитать все</span>
<span class="t" style="left:79.79px;top:189.14px;font-size:12px;font-weight:400;color:#2c2c2c;letter-spacing:0.159px;">История расчетов</span>
<svg class="f" width="1820" height="798" viewBox="0 0 1820 798" style="filter:drop-shadow(4px 4px 2px rgba(0,0,0,.55))">
<g fill="#c00000"><polygon points="189.0,4.4 190.2,5.8 96.4,46.0 95.2,43.4"/><polygon points="84.3,50.2 92.9,39.2 100.2,51.4"/>
<polygon points="188.9,4.6 190.5,5.2 144.2,83.6 141.8,82.4"/><polygon points="137.9,93.8 134.8,79.8 150.9,85.8"/></g></svg>
</body></html>
